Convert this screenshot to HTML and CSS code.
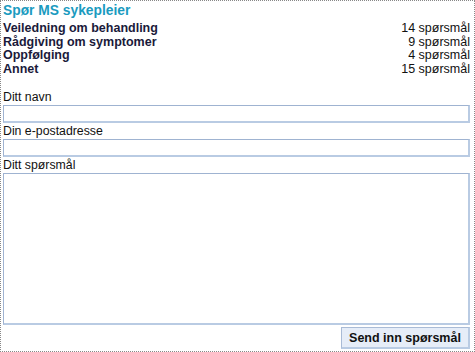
FILE: index.html
```html
<!DOCTYPE html>
<html>
<head>
<meta charset="utf-8">
<link rel="stylesheet" href="styles.css">
</head>
<body>
<div class="box">
  <h1 class="title">Spør MS sykepleier</h1>
  <ul class="topics">
    <li class="topic"><span class="name">Veiledning om behandling</span><span class="count">14 spørsmål</span></li>
    <li class="topic"><span class="name">Rådgiving om symptomer</span><span class="count">9 spørsmål</span></li>
    <li class="topic"><span class="name">Oppfølging</span><span class="count">4 spørsmål</span></li>
    <li class="topic"><span class="name">Annet</span><span class="count">15 spørsmål</span></li>
  </ul>
  <form class="form">
    <label class="label">Ditt navn</label>
    <input class="field" type="text">
    <label class="label">Din e-postadresse</label>
    <input class="field" type="text">
    <label class="label">Ditt spørsmål</label>
    <textarea class="field area"></textarea>
    <div class="actions"><button class="btn" type="button">Send inn spørsmål</button></div>
  </form>
</div>
</body>
</html>
```
FILE: styles.css
```css
html, body { margin: 0; padding: 0; background: #fff; }
body { font-family: "Liberation Sans", Arial, sans-serif; color: #1a1a3a; }
.box {
  width: 475px; height: 352px; box-sizing: border-box;
  border: 1px dotted #888;
  padding: 1px 4px 0 2px;
}
.title {
  margin: 0; font-size: 13.8px; font-weight: bold; color: #1b9bbf; line-height: 17px;
}
.topics { list-style: none; margin: 3px 0 0; padding: 0; }
.topic { display: flex; justify-content: space-between; font-size: 12.5px; line-height: 13.5px; }
.name { font-weight: bold; }
.count { font-weight: normal; color: #111; }
.form { display: flex; flex-direction: column; margin-top: 14px; }
.label { font-size: 12.3px; line-height: 15px; color: #111; }
.field {
  box-sizing: border-box; margin: 0 0 1px; width: 100%; height: 18px;
  border: 1px solid #9fb3d1; border-right: 2px solid #b9cbe3; border-bottom: 2px solid #b9cbe3;
  background: #fff; padding: 0; font: inherit;
}
.area { height: 152px; resize: none; margin-bottom: 2px; display: block; }
.actions { display: flex; justify-content: flex-end; }
.btn {
  font-family: "Liberation Sans", Arial, sans-serif; font-weight: bold; font-size: 12.5px; color: #111;
  background: #e6edf8; border: 1px solid #a9bbd6; border-right: 2px solid #b9cbe3; border-bottom: 2px solid #b9cbe3;
  width: 129px; height: 22px; padding: 0; margin: 0;
}
```
